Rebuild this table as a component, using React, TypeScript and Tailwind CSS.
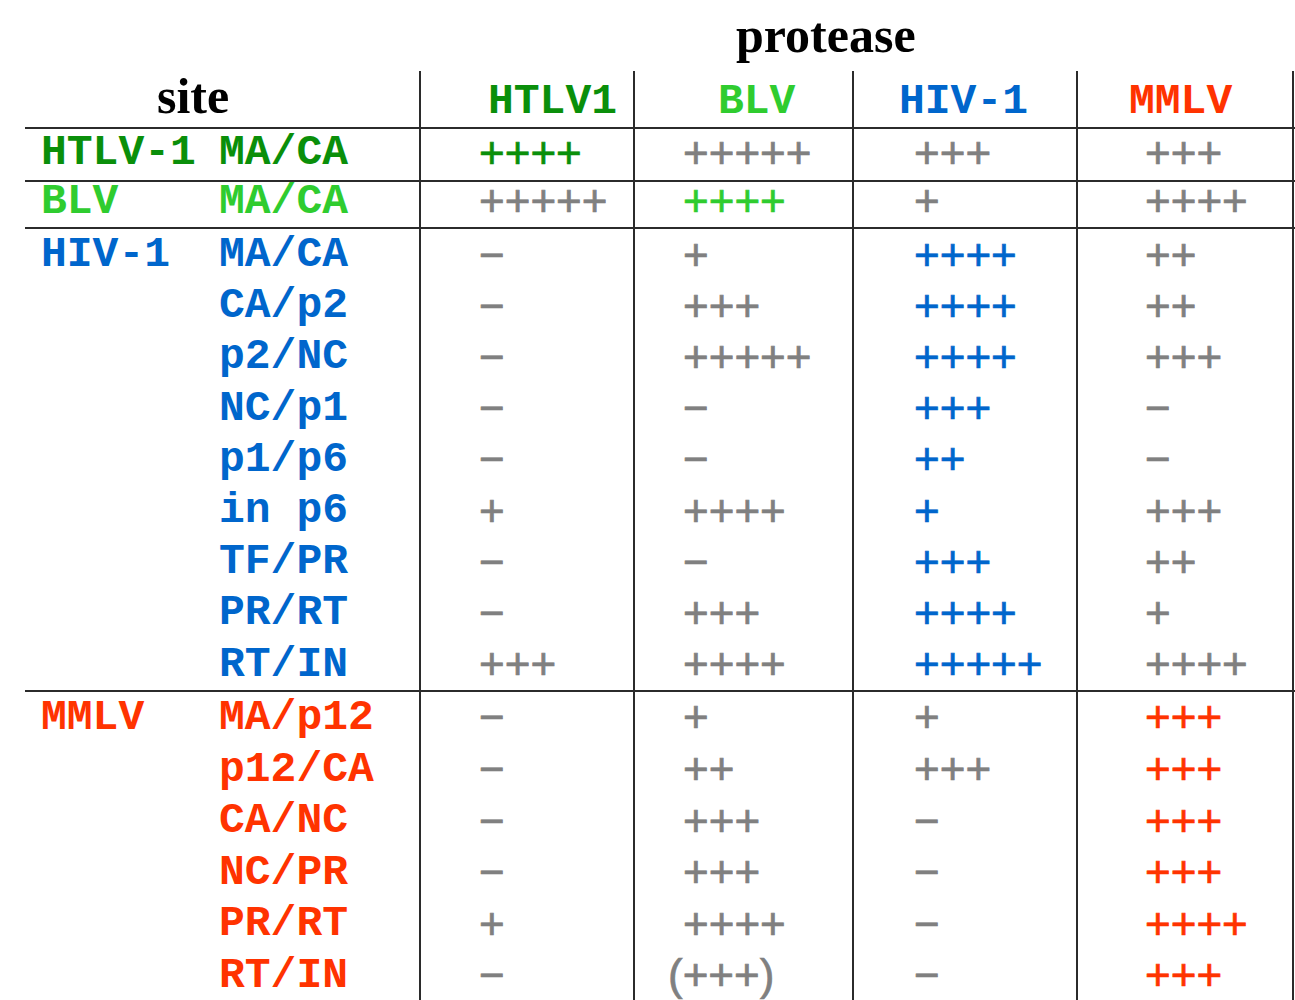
const MONO = "font-['Liberation_Mono','Courier_New',monospace] font-bold"
const SANS = "font-['Liberation_Sans',Arial,sans-serif] [-webkit-text-stroke:0.7px_currentColor]"
const SERIF = "font-['Liberation_Serif','Times_New_Roman',serif] font-bold"
const LINE = 'border-[#2b2b2b]'

const COLORS = {
  htlv: 'text-[#0a8f0a]',
  blv: 'text-[#2fcc2f]',
  hiv: 'text-[#0066cc]',
  mmlv: 'text-[#ff3300]',
  gray: 'text-[#808080]',
}

// one entry per protease column: width (incl. left rule) and left inset of the values
const COLUMNS = [
  { name: 'HTLV1', color: COLORS.htlv, w: 'w-[214px]', head: 'pl-[67px]', pad: 'pl-[58px]' },
  { name: 'BLV', color: COLORS.blv, w: 'w-[219px]', head: 'pl-[83px]', pad: 'pl-[48px]' },
  { name: 'HIV-1', color: COLORS.hiv, w: 'w-[224px]', head: 'pl-[45px]', pad: 'pl-[60px]' },
  { name: 'MMLV', color: COLORS.mmlv, w: 'w-[218px] border-r-2', head: 'pl-[51px]', pad: 'pl-[67px]' },
]

interface Group {
  virus: string
  diag: number
  rowClass: string
  cellClass?: string
  rows: { site: string; vals: string[] }[]
}

const M = '−'

const GROUPS: Group[] = [
  {
    virus: 'HTLV-1',
    diag: 0,
    rowClass: 'h-[51px]',
    cellClass: 'pb-[4px]',
    rows: [{ site: 'MA/CA', vals: ['++++', '+++++', '+++', '+++'] }],
  },
  {
    virus: 'BLV',
    diag: 1,
    rowClass: 'h-[45px]',
    cellClass: 'pb-[7px]',
    rows: [{ site: 'MA/CA', vals: ['+++++', '++++', '+', '++++'] }],
  },
  {
    virus: 'HIV-1',
    diag: 2,
    rowClass: 'h-[51.2px]',
    rows: [
      { site: 'MA/CA', vals: [M, '+', '++++', '++'] },
      { site: 'CA/p2', vals: [M, '+++', '++++', '++'] },
      { site: 'p2/NC', vals: [M, '+++++', '++++', '+++'] },
      { site: 'NC/p1', vals: [M, M, '+++', M] },
      { site: 'p1/p6', vals: [M, M, '++', M] },
      { site: 'in p6', vals: ['+', '++++', '+', '+++'] },
      { site: 'TF/PR', vals: [M, M, '+++', '++'] },
      { site: 'PR/RT', vals: [M, '+++', '++++', '+'] },
      { site: 'RT/IN', vals: ['+++', '++++', '+++++', '++++'] },
    ],
  },
  {
    virus: 'MMLV',
    diag: 3,
    rowClass: 'h-[51.6px]',
    rows: [
      { site: 'MA/p12', vals: [M, '+', '+', '+++'] },
      { site: 'p12/CA', vals: [M, '++', '+++', '+++'] },
      { site: 'CA/NC', vals: [M, '+++', M, '+++'] },
      { site: 'NC/PR', vals: [M, '+++', M, '+++'] },
      { site: 'PR/RT', vals: ['+', '++++', M, '++++'] },
      { site: 'RT/IN', vals: [M, '(+++)', M, '+++'] },
    ],
  },
]

const VIRUS_COLOR = [COLORS.htlv, COLORS.blv, COLORS.hiv, COLORS.mmlv]

function Value({ v }: { v: string }) {
  if (v.startsWith('(')) {
    return (
      <>
        <span className="-ml-[15px]">(</span>
        {v.slice(1)}
      </>
    )
  }
  return <>{v}</>
}

export default function App() {
  return (
    <div className="h-[1000px] w-[1295px] overflow-hidden bg-white text-black">
      {/* title */}
      <div className={`h-[71px] pl-[736px] pt-[10px] text-[50px] leading-none ${SERIF}`}>protease</div>

      {/* column headings */}
      <div className="ml-[25px] flex h-[56px]">
        <div className={`w-[394px] pl-[132px] text-[50px] leading-none ${SERIF}`}>site</div>
        {COLUMNS.map((col) => (
          <div
            key={col.name}
            className={`${col.w} ${col.head} ${LINE} border-l-2 pt-[9px] text-[43px] leading-none ${MONO} ${col.color}`}
          >
            {col.name}
          </div>
        ))}
      </div>

      {GROUPS.map((g, gi) => (
        <div key={g.virus} className={`ml-[25px] border-t-2 ${LINE}`}>
          {g.rows.map((row, ri) => (
            <div key={row.site} className={`flex items-stretch ${g.rowClass}`}>
              <div
                className={`flex w-[394px] items-center pl-[16px] text-[43px] leading-none ${MONO} ${VIRUS_COLOR[gi]} ${
                  g.cellClass ?? ''
                }`}
              >
                <span className="w-[178px] whitespace-pre">{ri === 0 ? g.virus : ''}</span>
                <span className="whitespace-pre">{row.site}</span>
              </div>
              {COLUMNS.map((col, ci) => (
                <div
                  key={col.name}
                  className={`flex items-center ${col.w} ${col.pad} ${LINE} border-l-2 text-[44px] leading-none whitespace-pre ${SANS} ${
                    ci === g.diag ? col.color : COLORS.gray
                  } ${g.cellClass ?? ''}`}
                >
                  <Value v={row.vals[ci]} />
                </div>
              ))}
            </div>
          ))}
        </div>
      ))}
    </div>
  )
}
